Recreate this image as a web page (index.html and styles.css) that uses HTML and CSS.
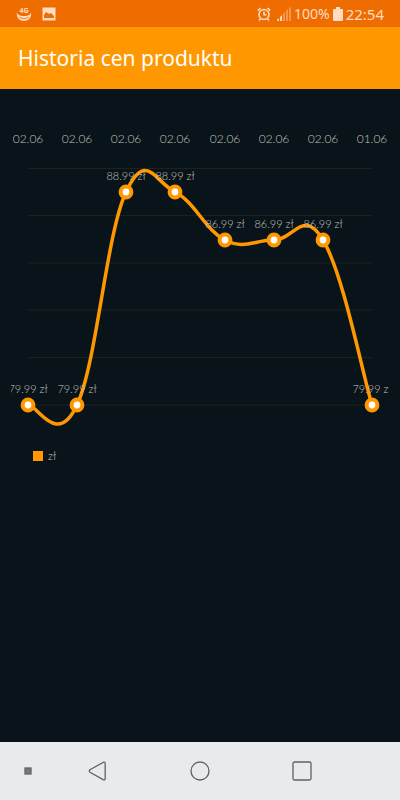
FILE: index.html
```
<!DOCTYPE html>
<html lang="pl">
<head>
  <meta charset="UTF-8" />
  <meta name="viewport" content="width=device-width, initial-scale=1.0" />
  <title>Historia cen produktu</title>
  <link rel="stylesheet" href="styles.css">
</head>
<body>

<div class="status-bar">
  <div class="status-left">
    <svg width="16" height="16" viewBox="0 0 16 16" aria-hidden="true">
      <path d="M1 6c0 2 2 4 7 4s7-2 7-4c1 5-2 9-7 9S0 11 1 6z" fill="#ffdcc2"/>
      <path d="M3 11.5q5 2.4 10 0" fill="none" stroke="#ef6c00" stroke-width=".8"/>
      <text x="8" y="7" class="badge-4g">4G</text>
    </svg>
    <svg width="14" height="14" viewBox="0 0 14 14" aria-hidden="true">
      <rect x="0.5" y="0.5" width="13" height="13" fill="#ffdcc2"/>
      <path d="M2 11V8l2-3 3 2 2-1 3 3v2z" fill="#ef6c00"/>
    </svg>
  </div>
  <div class="status-right">
    <svg width="14" height="14" viewBox="0 0 14 14" fill="none" stroke="#ffdcc2" stroke-width="1.5" aria-hidden="true">
      <circle cx="7" cy="7.5" r="5"/>
      <path d="M7 4.5v3.2h2.5M.8 3.6 3.6 1M13.2 3.6 10.4 1M3.6 11.8 2 13.4M10.4 11.8l1.6 1.6"/>
    </svg>
    <svg class="signal" width="14" height="14" viewBox="0 0 14 14" fill="#ffdcc2" aria-hidden="true">
      <path d="M0 14v-1l2-2v3zM3 14v-4l2-2v6z"/>
      <path d="M6 14V7l2-2v9zM9 14V4l2-2v12zM12 14V1l2-1v14z" opacity=".4"/>
    </svg>
    <span class="percent">100%</span>
    <svg width="10" height="14" viewBox="0 0 10 14" fill="#ffdcc2" aria-hidden="true">
      <path d="M3 0h4v2h2q1 0 1 1v10q0 1-1 1H1q-1 0-1-1V3q0-1 1-1h2z"/>
    </svg>
    <span class="clock">22:54</span>
  </div>
</div>

<header>
  <h1>Historia cen produktu</h1>
</header>

<main>
  <svg class="chart" viewBox="0 0 378 310" role="img" aria-label="Wykres historii cen">
    <g class="grid">
      <path d="M17 41.5h344M17 88.5h344M17 136h344M17 183h344M17 230.5h344M17 278h344"/>
    </g>

    <g class="dates">
      <text x="17" y="16">02.06</text>
      <text x="66" y="16">02.06</text>
      <text x="115" y="16">02.06</text>
      <text x="164" y="16">02.06</text>
      <text x="214" y="16">02.06</text>
      <text x="263" y="16">02.06</text>
      <text x="312" y="16">02.06</text>
      <text x="361" y="16">01.06</text>
    </g>

    <path class="line" d="M17 278C27 278 46 321 66 278S95 108 115 65C135 22 144 55 164 65S194 103 214 113S243 113 263 113S292 80 312 113S351 245 361 278"/>

    <g class="prices">
      <text x="17" y="266">79.99 zł</text>
      <text x="66" y="266">79.99 zł</text>
      <text x="115" y="53">88.99 zł</text>
      <text x="164" y="53">88.99 zł</text>
      <text x="214" y="101">86.99 zł</text>
      <text x="263" y="101">86.99 zł</text>
      <text x="312" y="101">86.99 zł</text>
      <text x="361" y="266">79.99 zł</text>
    </g>

    <g class="points">
      <circle cx="17" cy="278" r="5.4"/>
      <circle cx="66" cy="278" r="5.4"/>
      <circle cx="115" cy="65" r="5.4"/>
      <circle cx="164" cy="65" r="5.4"/>
      <circle cx="214" cy="113" r="5.4"/>
      <circle cx="263" cy="113" r="5.4"/>
      <circle cx="312" cy="113" r="5.4"/>
      <circle cx="361" cy="278" r="5.4"/>
    </g>
  </svg>

  <div class="legend"><span class="legend-box"></span>zł</div>
</main>

<nav>
  <button type="button" aria-label="Ukryj pasek">
    <svg width="8" height="8" viewBox="0 0 8 8"><rect x="1" y="1" width="6" height="6" fill="#777" stroke="#666"/></svg>
  </button>
  <button type="button" aria-label="Wstecz">
    <svg width="20" height="20" viewBox="0 0 20 20"><path d="M15.5 1.2 2 8.8q-1.5 1.2 0 2.4l13.5 7.6q1.7.4 1.7-1.3v-15q0-1.7-1.7-1.3z"/></svg>
  </button>
  <button type="button" aria-label="Ekran główny">
    <svg width="20" height="20" viewBox="0 0 20 20"><circle cx="10" cy="10" r="9"/></svg>
  </button>
  <button type="button" aria-label="Ostatnie aplikacje">
    <svg width="20" height="20" viewBox="0 0 20 20"><rect x="1" y="1" width="18" height="18" rx="1.5"/></svg>
  </button>
</nav>

</body>
</html>
```
FILE: styles.css
```
*,
*::before,
*::after {
  box-sizing: border-box;
  margin: 0;
  padding: 0;
}

body {
  display: flex;
  flex-direction: column;
  min-height: 100vh;
  background-color: #08141a;
  font-family: "Noto Sans", sans-serif;
}

.status-bar {
  display: flex;
  justify-content: space-between;
  align-items: center;
  height: 27px;
  padding: 0 16px;
  background-color: #ef6c00;
  color: #ffdcc2;
}

.status-left,
.status-right {
  display: flex;
  align-items: center;
}

.status-left {
  gap: 10px;
}

.status-right {
  gap: 3px;
}

.signal {
  margin-left: 3px;
}

.badge-4g {
  font-size: 7px;
  font-weight: bold;
  text-anchor: middle;
  fill: #ffdcc2;
}

.percent {
  font-size: 14px;
}

.clock {
  font-size: 15px;
}

header {
  padding: 16px 18px;
  background-color: #ff9800;
  color: #fff;
}

h1 {
  font-size: 21px;
  font-weight: normal;
  line-height: 30px;
}

main {
  flex: 1;
  padding: 38px 11px 0;
}

.chart {
  display: block;
  width: 100%;
  overflow: hidden;
}

.chart text {
  font-family: Lato, sans-serif;
  font-weight: 300;
  text-anchor: middle;
  fill: #c4c0bc;
}

.dates text {
  font-size: 12px;
}

.prices text {
  font-size: 11px;
}

.grid path {
  stroke: #231f1f;
  stroke-width: 1;
}

.line {
  fill: none;
  stroke: #ff9800;
  stroke-width: 3.5;
}

.points circle {
  fill: #fff;
  stroke: #ff9800;
  stroke-width: 4;
}

.legend {
  display: flex;
  align-items: center;
  gap: 5px;
  padding: 10px 22px;
  font-family: Lato, sans-serif;
  font-size: 11px;
  font-weight: 300;
  line-height: 18px;
  color: #c4c0bc;
}

.legend-box {
  width: 10px;
  height: 10px;
  background-color: #ff9800;
}

nav {
  display: grid;
  grid-template-columns: 14% 21% 30% 21%;
  align-items: center;
  height: 58px;
  background-color: #e9eaee;
}

nav button {
  display: flex;
  align-items: center;
  justify-content: center;
  height: 100%;
  border: none;
  background: none;
  cursor: pointer;
}

nav svg {
  fill: none;
  stroke: #606164;
  stroke-width: 1.3;
}
```
